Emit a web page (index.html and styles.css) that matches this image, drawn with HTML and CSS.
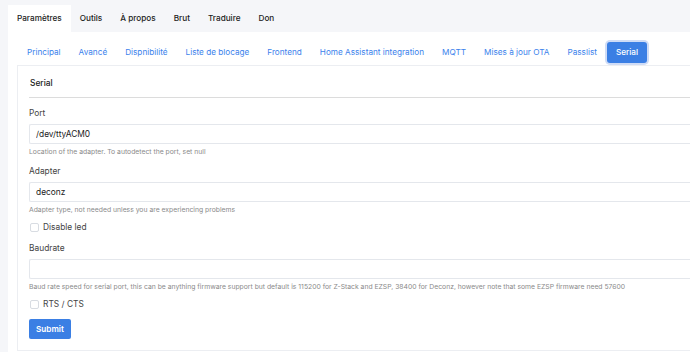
FILE: index.html
```html
<!DOCTYPE html>
<html>
	<head>
		<meta charset="utf-8" />
		<title>Paramètres</title>
		<link rel="stylesheet" href="styles.css">
	</head>
	<body>
		<ul class="topnav">
			<li class="active">Paramètres</li>
			<li>Outils</li>
			<li>À propos</li>
			<li>Brut</li>
			<li>Traduire</li>
			<li>Don</li>
		</ul>
		<div class="panel">
			<ul class="pills">
				<li>Principal</li>
				<li>Avancé</li>
				<li>Dispnibilité</li>
				<li>Liste de blocage</li>
				<li>Frontend</li>
				<li>Home Assistant integration</li>
				<li>MQTT</li>
				<li>Mises à jour OTA</li>
				<li>Passlist</li>
				<li class="active">Serial</li>
			</ul>
			<form class="card">
				<div class="card-header">Serial</div>
				<div class="group">
					<label>Port</label>
					<input type="text" value="/dev/ttyACM0" />
					<div class="help">Location of the adapter. To autodetect the port, set null</div>
				</div>
				<div class="group">
					<label>Adapter</label>
					<input type="text" value="deconz" />
					<div class="help">Adapter type, not needed unless you are experiencing problems</div>
				</div>
				<div class="check">
					<span class="box"></span>Disable led
				</div>
				<div class="group">
					<label>Baudrate</label>
					<input type="text" value="" />
					<div class="help">Baud rate speed for serial port, this can be anything firmware support but default is 115200 for Z-Stack and EZSP, 38400 for Deconz, however note that some EZSP firmware need 57600</div>
				</div>
				<div class="check">
					<span class="box"></span>RTS / CTS
				</div>
				<button type="button" class="submit">Submit</button>
			</form>
		</div>
	</body>
</html>
```

FILE: styles.css
```css
body, html {
	margin: 0;
	padding: 0;
	background-color: #f5f6f9;
	font-family: Inter, "Liberation Sans", sans-serif;
	overflow: hidden;
}

ul {
	list-style: none;
	margin: 0;
	padding: 0;
}

.topnav {
	display: flex;
	align-items: flex-end;
	height: 32px;
	padding-left: 8px;
}
.topnav li {
	height: 27px;
	line-height: 27px;
	padding: 0 9px;
	font-size: 8.2px;
	font-weight: 500;
	color: #1c1c1c;
}
.topnav li.active {
	background-color: #fff;
}

.panel {
	margin-left: 8px;
	background-color: #fff;
	padding: 9px 0 2px 9px;
	height: 320px;
	box-sizing: border-box;
}

.pills {
	display: flex;
	align-items: center;
	height: 23px;
	margin-left: 1px;
}
.pills li {
	padding: 0 9px;
	font-size: 8.2px;
	color: #3b82ec;
	line-height: 21px;
}
.pills li.active {
	background-color: #3b7fe4;
	color: #fff;
	font-weight: 500;
	padding: 0 9px;
	margin-left: 1px;
	border-radius: 3px;
	box-shadow: 0 0 0 2px #cfdcf6;
}

.card {
	margin: 1px 0 0 0;
	border: 1px solid #eceef2;
	border-right: 0;
	padding: 0 0 11px 11px;
	font-size: 8.4px;
	color: #333;
}
.card-header {
	height: 31px;
	line-height: 35px;
	border-bottom: 1px solid #dcdcdc;
	font-weight: 500;
	color: #222;
	padding-left: 1px;
}

.group {
	margin-top: 9px;
}
.group + .group {
	margin-top: 8px;
}
.group label {
	display: block;
	line-height: 12px;
	margin-bottom: 5px;
	color: #444;
}
.group input {
	display: block;
	width: 100%;
	box-sizing: border-box;
	height: 20px;
	border: 1px solid #e4e7ec;
	border-right: 0;
	border-radius: 2px 0 0 2px;
	padding: 0 6px;
	font-family: inherit;
	font-size: 8.4px;
	color: #222;
	outline: none;
}
.help {
	margin-top: 2px;
	line-height: 11px;
	font-size: 6.8px;
	color: #8a8a8a;
	white-space: nowrap;
}

.check {
	display: flex;
	align-items: center;
	margin-top: 6px;
	line-height: 12px;
	color: #444;
}
.check + .group {
	margin-top: 9px;
}
.group + .check:last-of-type {
	margin-top: 6px;
}
.check .box {
	width: 9px;
	height: 9px;
	box-sizing: border-box;
	border: 1px solid #d8dce2;
	border-radius: 2px;
	margin: 0 4px 0 1px;
}

.submit {
	display: block;
	margin-top: 9px;
	height: 20px;
	padding: 0 7px;
	border: 0;
	border-radius: 2px;
	background-color: #3b7fe4;
	color: #fff;
	font-family: inherit;
	font-size: 8.2px;
	font-weight: 600;
}
```
